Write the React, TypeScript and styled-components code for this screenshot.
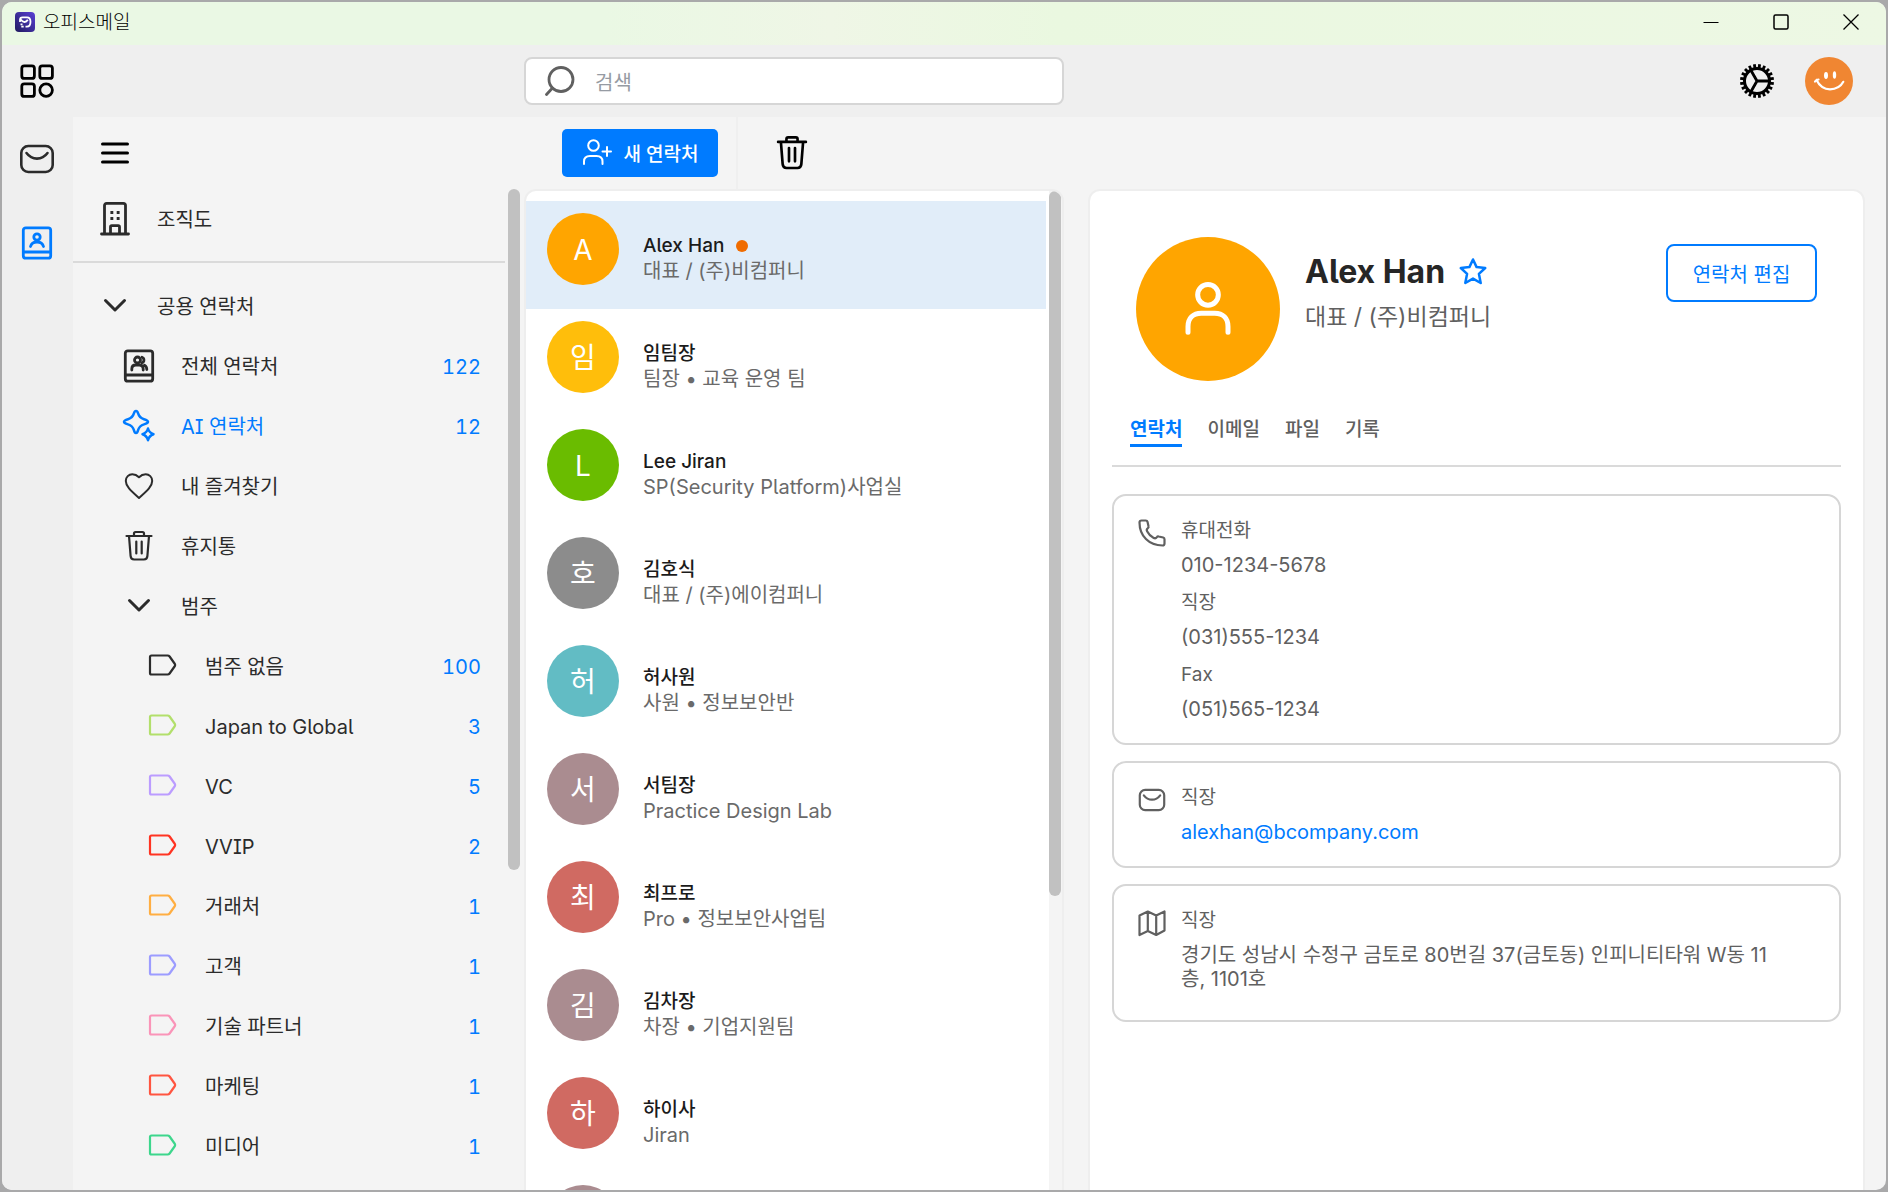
import React from "react";
import styled, { createGlobalStyle } from "styled-components";

const BLUE = "#007bff";

const Global = createGlobalStyle`
  *, *::before, *::after { box-sizing: border-box; }
  html, body, #root { height: 100%; }
  body {
    margin: 0;
    background: #a9a9aa;
    overflow: hidden;
    font-family: Inter, "Noto Sans CJK KR", sans-serif;
    color: #222;
  }
  button, input { font: inherit; color: inherit; }
  button { border: 0; background: none; padding: 0; cursor: pointer; }
  ul, dl, dd, h1, h2, p { margin: 0; padding: 0; }
  ul { list-style: none; }
  svg { display: block; flex: none; }
`;

const Window = styled.div`
  height: 100vh;
  padding: 2px;
`;
const Frame = styled.div`
  height: 100%;
  display: flex;
  flex-direction: column;
  border-radius: 10px;
  overflow: hidden;
  background: #f4f4f4;
`;
const TitleBar = styled.header`
  flex: none;
  height: 43px;
  display: flex;
  align-items: center;
  gap: 8px;
  padding: 0 0 3px 13px;
  background: linear-gradient(90deg, #eaf8e4 0%, #eaf8e4 32%, #eff6e6 44%, #eaf8e0 56%, #edf8e4 100%);
`;
const AppTitle = styled.h1`
  flex: 1;
  font-family: "Noto Sans CJK KR", sans-serif;
  font-size: 19px;
  font-weight: 300;
  line-height: 24px;
  padding-bottom: 2px;
  color: #000;
`;
const WindowButtons = styled.div`
  display: flex;
`;
const WindowButton = styled.button`
  width: 70px;
  height: 40px;
  display: grid;
  place-items: center;
`;
const TopBar = styled.div`
  flex: none;
  height: 72px;
  display: flex;
  align-items: center;
  background: #efefef;
`;
const TopLeft = styled.div`
  width: 522px;
  flex: none;
  padding-left: 18px;
`;
const IconButton = styled.button`
  display: grid;
  place-items: center;
`;
const SearchBox = styled.label`
  flex: none;
  width: 540px;
  height: 48px;
  display: flex;
  align-items: center;
  gap: 20px;
  padding: 0 19px;
  border: 2px solid #d6d6d6;
  border-radius: 8px;
  background: #fff;
`;
const SearchInput = styled.input`
  flex: 1;
  border: 0;
  outline: 0;
  padding: 3px 0 0;
  background: none;
  font-size: 20px;
  &::placeholder { color: #969ba3; opacity: 1; }
`;
const TopRight = styled.div`
  flex: 1;
  display: flex;
  justify-content: flex-end;
  align-items: center;
  gap: 30px;
  padding-right: 33px;
`;
const Body = styled.div`
  flex: 1;
  min-height: 0;
  display: flex;
`;
const Rail = styled.nav`
  flex: none;
  width: 71px;
  display: flex;
  flex-direction: column;
  align-items: flex-start;
  gap: 48px;
  padding: 24px 0 0 17px;
  background: #efefef;
`;
const Sidebar = styled.aside`
  flex: none;
  width: 451px;
  display: flex;
  flex-direction: column;
  font-feature-settings: "ss04", "cv05", "cv08", "tnum";
`;
const MenuBar = styled.div`
  flex: none;
  height: 72px;
  display: flex;
  align-items: center;
  padding-left: 27px;
`;
const SideScroll = styled.div`
  flex: 1;
  min-height: 0;
  display: flex;
  gap: 3px;
`;
const SideList = styled.ul`
  width: 432px;
  overflow: hidden;
`;
const SideItem = styled.li<{ $depth: number }>`
  height: 60px;
  display: flex;
  align-items: center;
  gap: 24px;
  padding: 0 24px 0 ${(p) => 24 + p.$depth * 24}px;
`;
const OrgItem = styled(SideItem)`
  height: 74px;
  padding-bottom: 12px;
  border-bottom: 2px solid #dadada;
  margin-bottom: 13px;
`;
const SideIcon = styled.span`
  flex: none;
  width: 36px;
  display: grid;
  place-items: center;
`;
const SideLink = styled.a<{ $active?: boolean }>`
  flex: 1;
  padding-top: 2px;
  font-size: 20px;
  line-height: 30px;
  text-decoration: none;
  color: ${(p) => (p.$active ? BLUE : "#2b2b2b")};
`;
const Count = styled.span`
  padding-top: 2px;
  font-size: 20px;
  line-height: 30px;
  color: ${BLUE};
`;
const Thumb = styled.div<{ $h: string }>`
  flex: none;
  width: 12px;
  height: ${(p) => p.$h};
  border-radius: 6px;
  background: #c1c1c1;
`;
const Main = styled.main`
  flex: 1;
  min-width: 0;
  display: flex;
  flex-direction: column;
`;
const Toolbar = styled.div`
  flex: none;
  height: 72px;
  display: flex;
  align-items: center;
  padding-left: 38px;
`;
const NewButton = styled.button`
  width: 156px;
  height: 48px;
  display: flex;
  align-items: center;
  justify-content: center;
  gap: 12px;
  padding-bottom: 2px;
  border-radius: 5px;
  background: ${BLUE};
  color: #fff;
  font-size: 19px;
  font-weight: 500;
`;
const ToolDivider = styled.div`
  width: 2px;
  height: 72px;
  margin: 0 34px 0 18px;
  background: #efefef;
`;
const Panes = styled.div`
  flex: 1;
  min-height: 0;
  display: flex;
  gap: 24px;
  padding-right: 21px;
`;
const ListPane = styled.section`
  flex: none;
  width: 540px;
  display: flex;
  gap: 3px;
  border: 2px solid #eee;
  border-bottom: 0;
  border-radius: 12px 12px 0 0;
  background: linear-gradient(90deg, #fff 523px, #f4f4f4 523px);
  overflow: hidden;
`;
const ContactList = styled.ul`
  width: 520px;
  padding-top: 10px;
  overflow: hidden;
  font-feature-settings: "ss04", "cv05", "cv08";
`;
const Contact = styled.li<{ $selected?: boolean }>`
  height: 108px;
  display: flex;
  align-items: center;
  gap: 24px;
  padding: 0 21px 12px;
  background: ${(p) => (p.$selected ? "#e1edf9" : "transparent")};
`;
const Avatar = styled.div<{ $color: string }>`
  flex: none;
  width: 72px;
  height: 72px;
  display: grid;
  place-items: center;
  padding-top: 2px;
  border-radius: 50%;
  background: ${(p) => p.$color};
  color: #fff;
  font-size: 28px;
  line-height: 40px;
`;
const ContactText = styled.div`
  padding-top: 18px;
`;
const Name = styled.h2`
  display: flex;
  align-items: center;
  gap: 12px;
  font-size: 19px;
  font-weight: 500;
  line-height: 26px;
  color: #1b1b1b;
`;
const Dot = styled.span`
  width: 12px;
  height: 12px;
  border-radius: 50%;
  background: #f06c00;
`;
const Role = styled.p`
  font-size: 20px;
  line-height: 24px;
  color: #6a6a6a;
`;
const Detail = styled.section`
  flex: 1;
  min-width: 0;
  padding: 46px 22px 0;
  border: 2px solid #eee;
  border-bottom: 0;
  border-radius: 12px 12px 0 0;
  background: #fff;
`;
const Profile = styled.div`
  display: flex;
  gap: 25px;
  padding: 0 24px;
`;
const BigAvatar = styled.div`
  flex: none;
  width: 144px;
  height: 144px;
  display: grid;
  place-items: center;
  border-radius: 50%;
  background: #ffa500;
`;
const ProfileText = styled.div`
  flex: 1;
  padding-top: 14px;
  font-feature-settings: "cv05";
`;
const ProfileName = styled.div`
  display: flex;
  align-items: center;
  gap: 14px;
  font-size: 32px;
  font-weight: 700;
  line-height: 42px;
  color: #262626;
`;
const ProfileRole = styled.p`
  margin-top: 8px;
  font-size: 23px;
  line-height: 32px;
  color: #606060;
`;
const EditButton = styled.button`
  width: 151px;
  height: 58px;
  margin-top: 7px;
  border: 2px solid ${BLUE};
  border-radius: 8px;
  color: ${BLUE};
  font-size: 20px;
`;
const Tabs = styled.div`
  display: flex;
  gap: 25px;
  margin-top: 32px;
  padding: 0 18px 18px;
  border-bottom: 2px solid #dadada;
`;
const Tab = styled.button<{ $active?: boolean }>`
  height: 34px;
  padding-top: 2px;
  border-bottom: 3px solid ${(p) => (p.$active ? BLUE : "transparent")};
  font-size: 19px;
  font-weight: ${(p) => (p.$active ? 700 : 500)};
  line-height: 29px;
  color: ${(p) => (p.$active ? BLUE : "#606060")};
`;
const Cards = styled.div`
  display: flex;
  flex-direction: column;
  gap: 16px;
  padding-top: 27px;
`;
const Card = styled.article<{ $tall?: boolean }>`
  display: flex;
  gap: 15px;
  padding: 18px 60px ${(p) => (p.$tall ? 20 : 13)}px 24px;
  border: 2px solid #d6d6d6;
  border-radius: 14px;
  color: #606060;
`;
const CardIcon = styled.span`
  padding-top: 5px;
`;
const Fields = styled.dl`
  flex: 1;
`;
const Label = styled.dt`
  font-size: 19px;
  line-height: 34px;
`;
const Value = styled.dd`
  padding: 5px 0 9px;
  font-size: 20px;
  line-height: 24px;
`;
const MailLink = styled.a`
  color: ${BLUE};
  text-decoration: none;
`;

type S = { size?: number; color?: string; w?: number };
const Svg = ({ size = 36, color = "#2b2b2b", w = 2, children }: S & { children: React.ReactNode }) => (
  <svg width={size} height={size} viewBox="0 0 36 36" fill="none" stroke={color} strokeWidth={w} strokeLinecap="round" strokeLinejoin="round" aria-hidden="true">
    {children}
  </svg>
);

const MailIcon = (p: S) => (
  <Svg w={2.6} {...p}>
    <rect x="2.3" y="5" width="31.400" height="26" rx="7" />
    <path d="M7.500 12c5.500 7.500 15.500 7.500 21 0" />
  </Svg>
);
const BookIcon = ({ people, ...p }: S & { people?: boolean }) => (
  <Svg w={2.8} {...p}>
    <rect x="4.300" y="2.800" width="27.400" height="30.400" rx="2.500" />
    <path d="M4.500 27h27" />
    {people ? (
      <>
        <circle cx="16.500" cy="12" r="3" />
        <path d="M10.800 22v-1c0-2.500 1.500-4 4-4h3.400c2.500 0 4 1.500 4 4v1M21 9.200a3 3 0 0 1 0 5.600M23.500 17.300c1.600.8 2.300 2 2.300 4.200" />
      </>
    ) : (
      <>
        <circle cx="18" cy="12" r="3.200" />
        <path d="M11.500 21.500c1.500-6 11.500-6 13 0" />
      </>
    )}
  </Svg>
);
const TrashIcon = (p: S) => (
  <Svg {...p}>
    <path d="M5.500 8h25M13 8V5.500C13 4.500 13.700 4 14.500 4h7c.8 0 1.500.5 1.500 1.500V8M8 8l1.600 20c.2 2.400 1.400 3.500 3.500 3.500h9.800c2.100 0 3.300-1.100 3.500-3.500L28 8M15.300 13.500v12M20.700 13.500v12" />
  </Svg>
);
const ChevronIcon = () => (
  <Svg w={3}>
    <path d="M8.500 12.500 18 22l9.500-9.500" />
  </Svg>
);
const OrgIcon = () => (
  <Svg w={2.800}>
    <path d="M4.500 33h27M7.500 33V4.500c0-1.400.8-2.200 2.200-2.200h16.600c1.400 0 2.200.8 2.200 2.200V33M13.500 33v-7c0-.8.500-1.300 1.300-1.300h6.400c.8 0 1.300.5 1.300 1.300v7" />
    <path d="M14.800 11.500h.1M21.100 11.500h.1M14.800 17.500h.1M21.100 17.500h.1" strokeLinecap="square" />
  </Svg>
);
const SparkleIcon = () => (
  <Svg color={BLUE} w={2.500}>
    <path d="M15 3c1 0 1.600.8 2 2.200 1 3.500 2.500 5 6 6 1.800.5 4 1.200 4 2.600s-2.200 2.100-4 2.600c-3.500 1-5 2.500-6 6-.4 1.600-1 2.600-2 2.600s-1.600-1-2-2.600c-1-3.500-2.500-5-6-6-1.800-.5-4-1.200-4-2.600s2.200-2.100 4-2.600c3.500-1 5-2.500 6-6C13.400 3.800 14 3 15 3Z" />
    <path d="M27 20.500c.8 3 1.800 4.500 5.500 5.700-3.700 1.200-4.700 2.700-5.500 6-.8-3.300-1.800-4.800-5.500-6 3.700-1.200 4.700-2.700 5.500-5.700Z" />
  </Svg>
);
const HeartIcon = () => (
  <Svg>
    <path d="M18 30C9 22 4.800 18 4.800 13c0-4 3-6.700 6.500-6.700 2.800 0 5.200 1.500 6.700 3 1.500-1.500 3.900-3 6.700-3 3.500 0 6.500 2.700 6.500 6.700 0 5-4.200 9-13.200 17Z" />
  </Svg>
);
const TagIcon = ({ color }: { color: string }) => (
  <Svg color={color} w={2.200}>
    <path d="M6.500 7.500h16c1 0 1.600.3 2.100 1l5.300 7.500c.4.700.4 1.300 0 2l-5.300 7.500c-.5.700-1.100 1-2.100 1h-16c-.9 0-1.500-.6-1.500-1.500V9c0-.9.600-1.500 1.500-1.500Z" />
  </Svg>
);
const UserIcon = ({ size, w }: S) => (
  <Svg size={size} color="#fff" w={w}>
    <circle cx="18" cy="9.500" r="6.200" />
    <path d="M6 32v-3.500c0-5 3-8 8-8h8c5 0 8 3 8 8V32" />
  </Svg>
);

type Side = { label: string; icon: React.ReactNode; depth: number; count?: number; active?: boolean };
const tag = (label: string, color: string, count: number): Side => ({ label, icon: <TagIcon color={color} />, depth: 2, count });
const SIDE: Side[] = [
  { label: "공용 연락처", icon: <ChevronIcon />, depth: 0 },
  { label: "전체 연락처", icon: <BookIcon people />, depth: 1, count: 122 },
  { label: "AI 연락처", icon: <SparkleIcon />, depth: 1, count: 12, active: true },
  { label: "내 즐겨찾기", icon: <HeartIcon />, depth: 1 },
  { label: "휴지통", icon: <TrashIcon w={2.200} />, depth: 1 },
  { label: "범주", icon: <ChevronIcon />, depth: 1 },
  tag("범주 없음", "#2b2b2b", 100),
  tag("Japan to Global", "#b2df6b", 3),
  tag("VC", "#bb9cff", 5),
  tag("VVIP", "#ff3422", 2),
  tag("거래처", "#ffae42", 1),
  tag("고객", "#9c9cff", 1),
  tag("기술 파트너", "#fa94b8", 1),
  tag("마케팅", "#ff5540", 1),
  tag("미디어", "#3dd68c", 1),
];

const CONTACTS = [
  { i: "A", color: "#ffa500", name: "Alex Han", role: "대표 / (주)비컴퍼니", on: true },
  { i: "임", color: "#ffbe0b", name: "임팀장", role: "팀장 • 교육 운영 팀" },
  { i: "L", color: "#6abc00", name: "Lee Jiran", role: "SP(Security Platform)사업실" },
  { i: "호", color: "#8c8c8c", name: "김호식", role: "대표 / (주)에이컴퍼니" },
  { i: "허", color: "#62bcc4", name: "허사원", role: "사원 • 정보보안반" },
  { i: "서", color: "#aa8c90", name: "서팀장", role: "Practice Design Lab" },
  { i: "최", color: "#d06a62", name: "최프로", role: "Pro • 정보보안사업팀" },
  { i: "김", color: "#aa8c90", name: "김차장", role: "차장 • 기업지원팀" },
  { i: "하", color: "#d06a62", name: "하이사", role: "Jiran" },
  { i: "", color: "#aa8c90", name: "", role: "" },
];

const TEETH = Array.from({ length: 20 }, (_, k) => k * 18 + 9);

export default function App() {
  return (
    <Window>
      <Global />
      <Frame>
        <TitleBar>
          <svg width="20" height="20" viewBox="0 0 20 20" aria-hidden="true">
            <defs>
              <linearGradient id="logo" x1="0" y1="1" x2="1" y2="0">
                <stop offset="0" stopColor="#201a5e" />
                <stop offset="1" stopColor="#5a3fd6" />
              </linearGradient>
            </defs>
            <rect width="20" height="20" rx="4" fill="url(#logo)" />
            <path d="M5 10V7.800C5 6.200 6 5.300 7.500 5.300h4.500c2.300 0 3.500 1.700 3.500 4.400 0 3-1.300 5-3.700 5h-1.300M5.800 7.500c2.200 3.300 5.200 3.300 7 .3M5.500 12.300h2M6.300 14.700h2.400" fill="none" stroke="#fff" strokeWidth="1.800" />
          </svg>
          <AppTitle>오피스메일</AppTitle>
          <WindowButtons>
            <WindowButton aria-label="최소화">
              <svg width="16" height="16" stroke="#000" fill="none"><path d="M.5 8.500h15" /></svg>
            </WindowButton>
            <WindowButton aria-label="최대화">
              <svg width="16" height="16" stroke="#000" fill="none" strokeWidth="1.500"><rect x="1" y="1" width="14" height="14" rx="1.500" /></svg>
            </WindowButton>
            <WindowButton aria-label="닫기">
              <svg width="16" height="16" stroke="#000" fill="none" strokeWidth="1.300"><path d="m.5.5 15 15M15.500.5l-15 15" /></svg>
            </WindowButton>
          </WindowButtons>
        </TitleBar>
        <TopBar>
          <TopLeft>
            <IconButton aria-label="앱">
              <svg width="34" height="34" viewBox="0 0 34 34" fill="none" stroke="#000" strokeWidth="2.800">
                <rect x="1.800" y="1.800" width="12.600" height="12.600" rx="2.500" />
                <rect x="19.800" y="1.800" width="12.600" height="12.600" rx="2.500" />
                <rect x="1.800" y="19.800" width="12.600" height="12.600" rx="2.500" />
                <circle cx="26.100" cy="26.100" r="6.300" />
              </svg>
            </IconButton>
          </TopLeft>
          <SearchBox>
            <svg width="30" height="30" viewBox="0 0 30 30" fill="none" stroke="#606060" strokeWidth="2.800" strokeLinecap="round" aria-hidden="true">
              <circle cx="16" cy="13.500" r="12" />
              <path d="M7.500 22 1.500 28.500" />
            </svg>
            <SearchInput placeholder="검색" aria-label="검색" />
          </SearchBox>
          <TopRight>
            <IconButton aria-label="설정">
              <svg width="36" height="36" viewBox="-18 -18 36 36" fill="none" stroke="#000">
                <circle r="12.500" strokeWidth="3" />
                {TEETH.map((a) => (
                  <path key={a} d="M0-13v-4" strokeWidth="2.800" transform={`rotate(${a})`} />
                ))}
                <path d="M0 0h12M0 0-6-10.500M0 0-6 10.500" strokeWidth="2.800" />
              </svg>
            </IconButton>
            <IconButton aria-label="프로필">
              <svg width="48" height="48" viewBox="0 0 48 48">
                <circle cx="24" cy="24" r="24" fill="#f08632" />
                <ellipse cx="21" cy="18.500" rx="2" ry="3.400" fill="#fff" />
                <ellipse cx="29.500" cy="18" rx="1.700" ry="3.800" fill="#fff" />
                <path d="M10 24.500c1-1.500 2-2 3.500-2M11.500 23c3 6 8 9.300 13.500 9.300s10.500-2.300 13.300-7.500" fill="none" stroke="#fff" strokeWidth="2.200" strokeLinecap="round" />
              </svg>
            </IconButton>
          </TopRight>
        </TopBar>
        <Body>
          <Rail>
            <IconButton aria-label="메일"><MailIcon /></IconButton>
            <IconButton aria-label="연락처"><BookIcon color={BLUE} /></IconButton>
          </Rail>
          <Sidebar>
            <MenuBar>
              <IconButton aria-label="메뉴">
                <svg width="30" height="24" viewBox="0 0 30 24" stroke="#000" strokeWidth="3" strokeLinecap="round"><path d="M2.500 3h25M2.500 12h25M2.500 21h25" /></svg>
              </IconButton>
            </MenuBar>
            <SideScroll>
              <SideList>
                <OrgItem $depth={0}>
                  <SideIcon><OrgIcon /></SideIcon>
                  <SideLink href="#">조직도</SideLink>
                </OrgItem>
                {SIDE.map((s) => (
                  <SideItem key={s.label} $depth={s.depth}>
                    <SideIcon>{s.icon}</SideIcon>
                    <SideLink href="#" $active={s.active}>{s.label}</SideLink>
                    {s.count && <Count>{s.count}</Count>}
                  </SideItem>
                ))}
              </SideList>
              <Thumb $h="68%" />
            </SideScroll>
          </Sidebar>
          <Main>
            <Toolbar>
              <NewButton>
                <svg width="30" height="26" viewBox="0 0 30 26" fill="none" stroke="#fff" strokeWidth="2" strokeLinecap="round" aria-hidden="true">
                  <circle cx="11.500" cy="6.500" r="5.300" />
                  <path d="M2 25v-2.500C2 19 4.500 17 8 17h6.500c3.500 0 6 2 6 5.500V25M25 8v9M20.500 12.500h8.500" />
                </svg>
                새 연락처
              </NewButton>
              <ToolDivider />
              <IconButton aria-label="삭제"><TrashIcon color="#000" w={2.400} size={40} /></IconButton>
            </Toolbar>
            <Panes>
              <ListPane>
                <ContactList>
                  {CONTACTS.map((c, k) => (
                    <Contact key={k} $selected={c.on}>
                      <Avatar $color={c.color}>{c.i}</Avatar>
                      <ContactText>
                        <Name>{c.name}{c.on && <Dot />}</Name>
                        <Role>{c.role}</Role>
                      </ContactText>
                    </Contact>
                  ))}
                </ContactList>
                <Thumb $h="70.6%" />
              </ListPane>
              <Detail>
                <Profile>
                  <BigAvatar><UserIcon size={60} w={3} /></BigAvatar>
                  <ProfileText>
                    <ProfileName>
                      Alex Han
                      <IconButton aria-label="즐겨찾기">
                        <svg width="28" height="28" viewBox="0 0 28 28" fill="none" stroke={BLUE} strokeWidth="2.500" strokeLinejoin="round">
                          <path d="m14 1.500 3.600 7.600 8.600.9-6.300 5.800 1.800 9.200-7.700-4.400L6.300 25l1.800-9.200L1.800 10l8.600-.9Z" />
                        </svg>
                      </IconButton>
                    </ProfileName>
                    <ProfileRole>대표 / (주)비컴퍼니</ProfileRole>
                  </ProfileText>
                  <EditButton>연락처 편집</EditButton>
                </Profile>
                <Tabs>
                  <Tab $active>연락처</Tab>
                  <Tab>이메일</Tab>
                  <Tab>파일</Tab>
                  <Tab>기록</Tab>
                </Tabs>
                <Cards>
                  <Card>
                    <CardIcon>
                      <svg width="28" height="28" viewBox="0 0 28 28" fill="none" stroke="#606060" strokeWidth="2.200" strokeLinejoin="round">
                        <path d="M3.500 1.500h4.300c.8 0 1.500.5 1.700 1.300l1 4.500c.2.700 0 1.400-.6 1.800-1.400 1-1.500 1.800-.8 3.200 1.400 2.900 3.700 5.200 6.600 6.600 1.400.7 2.200.6 3.200-.8.400-.6 1.100-.8 1.800-.6l4.500 1c.8.200 1.300.9 1.300 1.700v4.300c0 1.100-.9 2-2 2C11 26.500 1.500 17 1.500 3.500c0-1.100.9-2 2-2Z" />
                      </svg>
                    </CardIcon>
                    <Fields>
                      <Label>휴대전화</Label><Value>010-1234-5678</Value>
                      <Label>직장</Label><Value>(031)555-1234</Value>
                      <Label>Fax</Label><Value>(051)565-1234</Value>
                    </Fields>
                  </Card>
                  <Card>
                    <CardIcon><MailIcon size={28} color="#606060" w={2.800} /></CardIcon>
                    <Fields>
                      <Label>직장</Label>
                      <Value><MailLink href="mailto:alexhan@bcompany.com">alexhan@bcompany.com</MailLink></Value>
                    </Fields>
                  </Card>
                  <Card $tall>
                    <CardIcon>
                      <svg width="28" height="28" viewBox="0 0 28 28" fill="none" stroke="#606060" strokeWidth="2.200" strokeLinejoin="round">
                        <path d="M1.500 6.500 9.800 2.500l8.400 4 8.300-4v19l-8.300 4.500-8.400-4-8.300 4ZM9.800 2.500V22M18.200 6.500V26" />
                      </svg>
                    </CardIcon>
                    <Fields>
                      <Label>직장</Label>
                      <Value>경기도 성남시 수정구 금토로 80번길 37(금토동) 인피니티타워 W동 11층, 1101호</Value>
                    </Fields>
                  </Card>
                </Cards>
              </Detail>
            </Panes>
          </Main>
        </Body>
      </Frame>
    </Window>
  );
}
